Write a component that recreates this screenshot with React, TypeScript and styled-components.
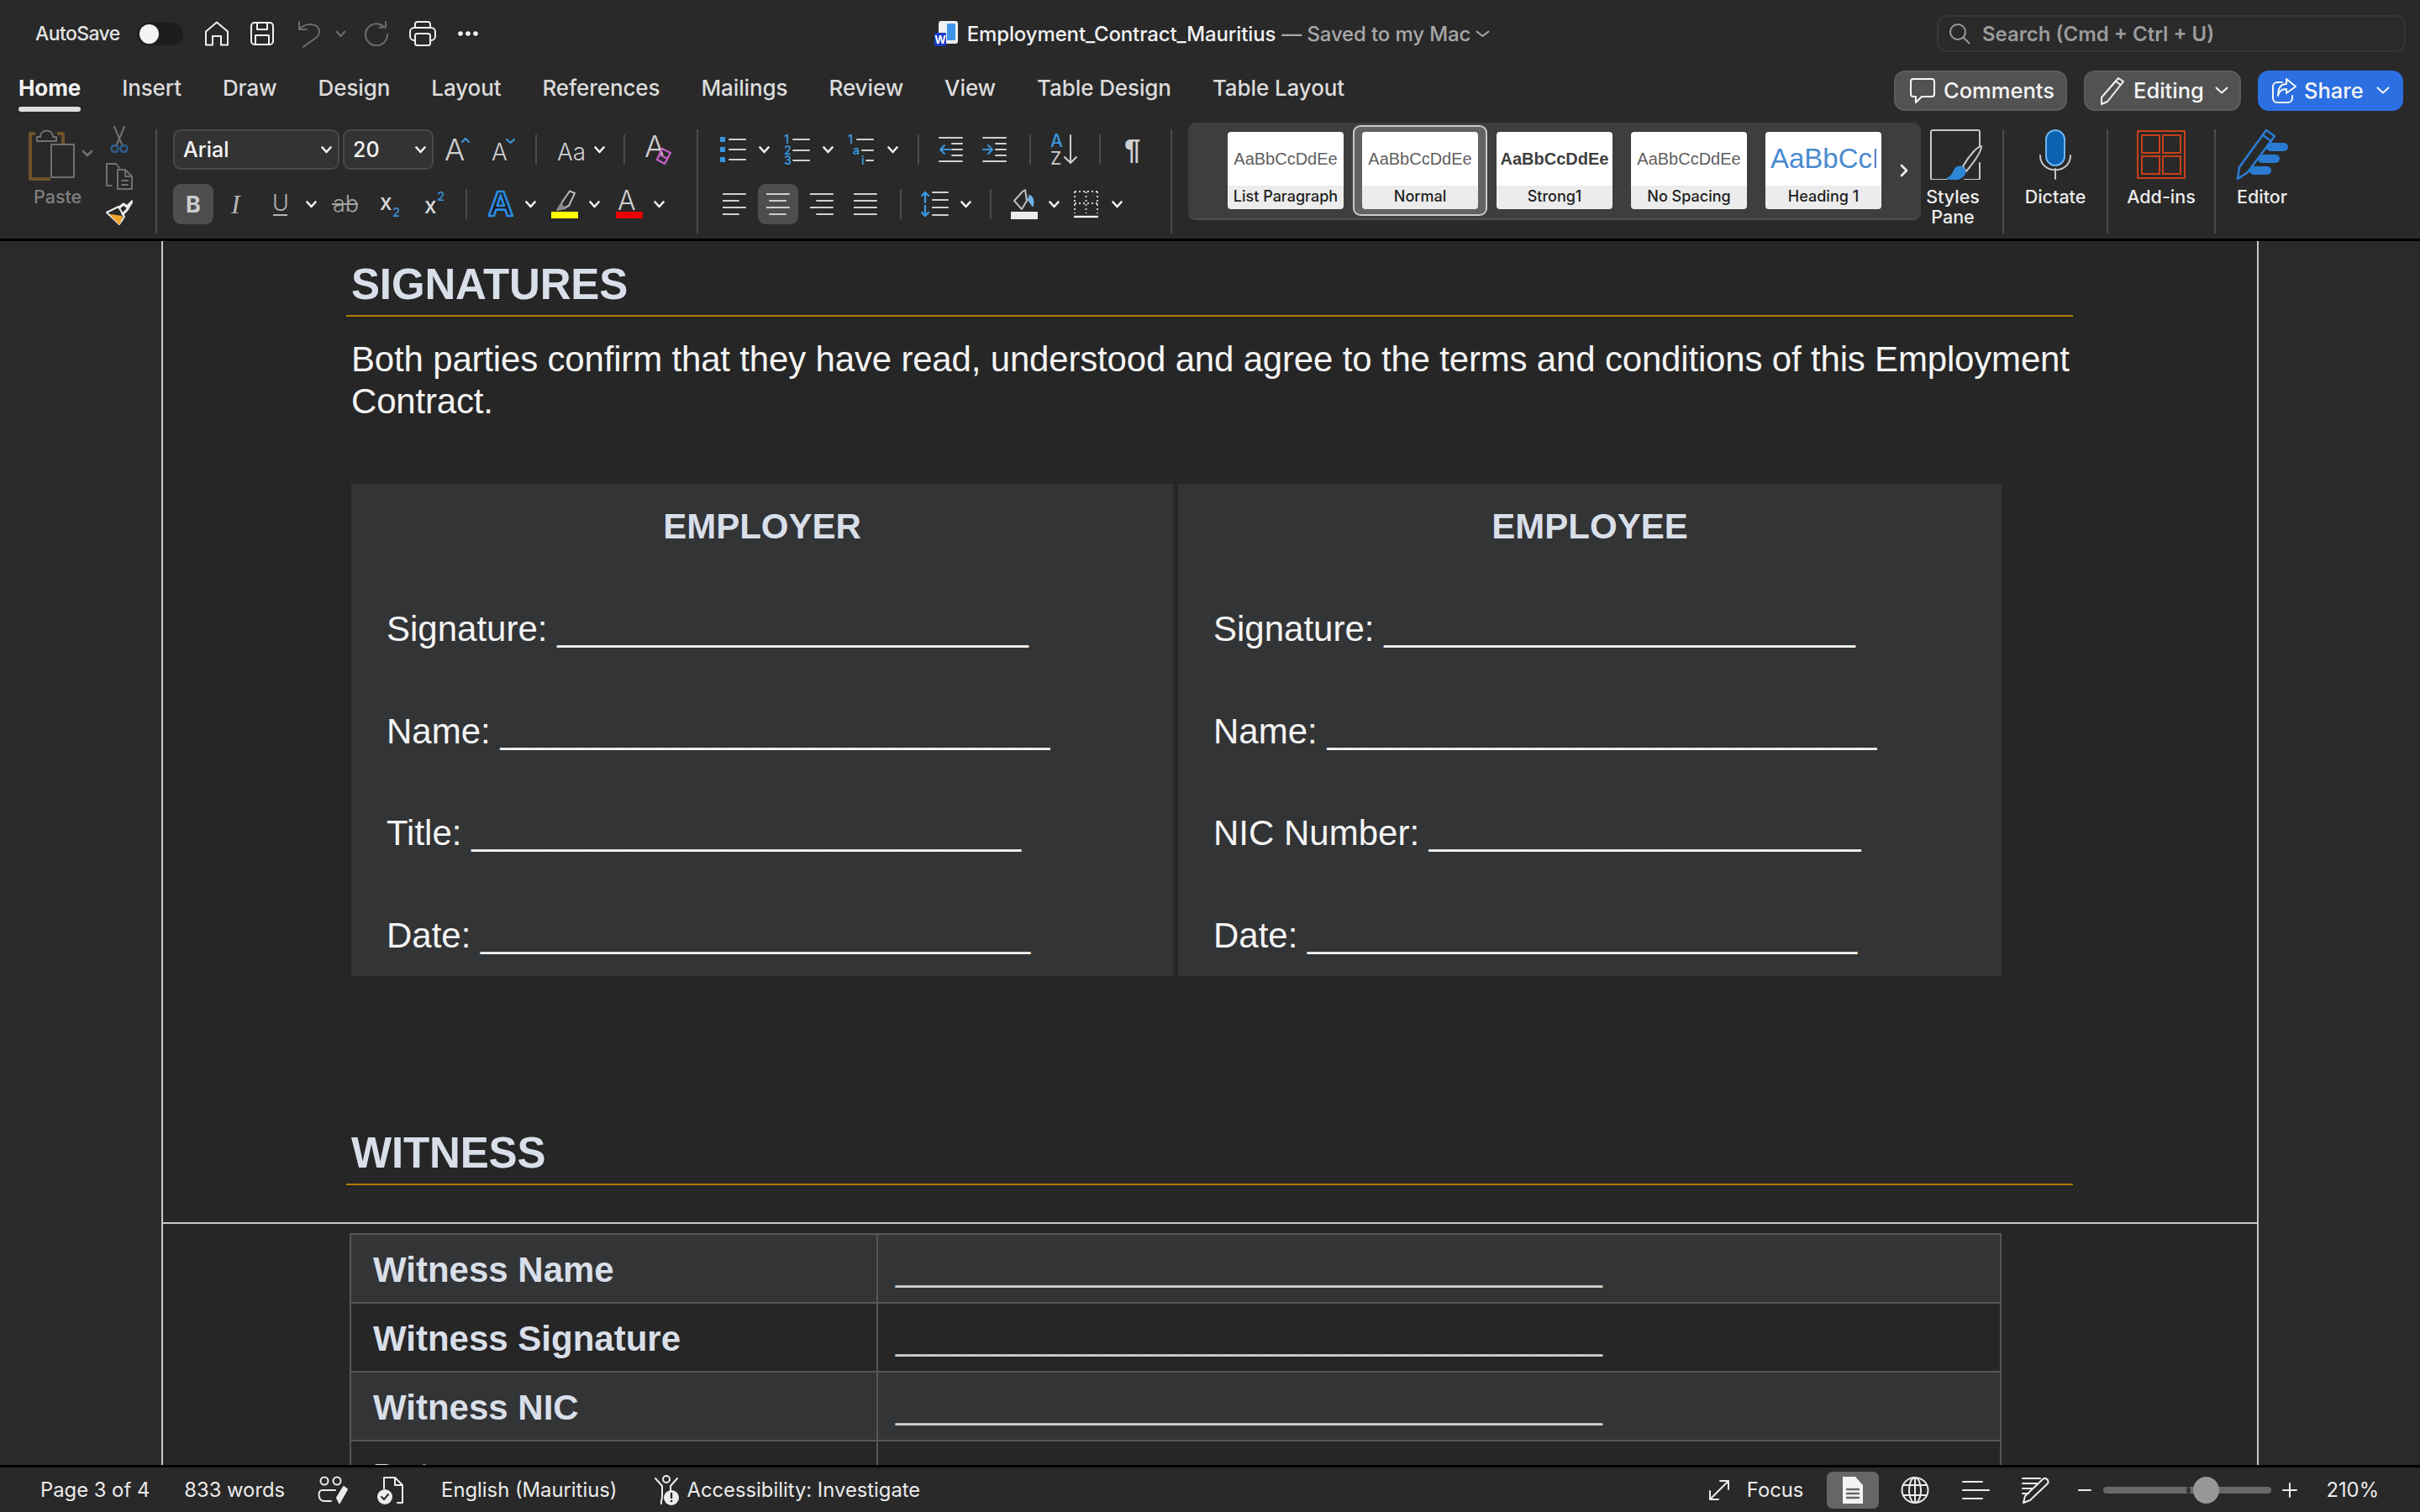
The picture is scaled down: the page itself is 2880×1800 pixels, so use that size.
import React from 'react';
import styled, { createGlobalStyle } from 'styled-components';

const UI = `Inter, "Noto Sans", sans-serif`;
const DOC = `"Liberation Sans", Arial, sans-serif`;
const BLUE = '#3a96dd';
const LINE = '#cfcfcf';

const GlobalStyle = createGlobalStyle`
    html, body { margin: 0; padding: 0; background: #292929; }
    * { box-sizing: border-box; }
`;

const Shell = styled.div`
    display: flex;
    flex-direction: column;
    width: 2880px;
    height: 1800px;
    overflow: hidden;
    background: #292929;
    font-family: ${UI};
    color: #e8e8e8;
`;

/* ---------- icon helpers ---------- */

const Glyph = styled.svg<{ $ml?: number }>`
    flex: none;
    display: block;
    margin-left: ${(p) => p.$ml ?? 0}px;
`;

type IcoProps = { w: number; h: number; ml?: number; sw?: number; children?: React.ReactNode };

const Ico = ({ w, h, ml, sw = 2, children }: IcoProps) => (
    <Glyph
        $ml={ml}
        width={w}
        height={h}
        viewBox={`0 0 ${w} ${h}`}
        fill="none"
        stroke="currentColor"
        strokeWidth={sw}
        strokeLinecap="round"
        strokeLinejoin="round"
    >
        {children}
    </Glyph>
);

const Chev = ({ ml }: { ml?: number }) => (
    <Ico w={13} h={9} ml={ml} sw={2.6}>
        <path d="M1.5 1.5 L6.5 7 L11.5 1.5" stroke="#f2f2f2" />
    </Ico>
);

const GlyphText = styled.text<{ $w?: number; $serif?: boolean; $italic?: boolean }>`
    font-family: ${(p) => (p.$serif ? '"Liberation Serif", serif' : UI)};
    font-weight: ${(p) => p.$w ?? 400};
    font-style: ${(p) => (p.$italic ? 'italic' : 'normal')};
    stroke: none;
`;

const Lines = ({ rows, x = 0 }: { rows: [number, number, number][]; x?: number }) => (
    <g stroke={LINE}>
        {rows.map(([a, b, y]) => (
            <path key={`${a}-${y}`} d={`M${a + x} ${y} H${b + x}`} />
        ))}
    </g>
);

/* ---------- title bar ---------- */

const TitleBar = styled.div`
    display: flex;
    align-items: center;
    height: 80px;
    padding: 0 17px 0 42px;
    flex: none;
`;

const AutoSave = styled.span`
    font-size: 23px;
    font-weight: 500;
    color: #e4e4e4;
    letter-spacing: -0.6px;
`;

const Toggle = styled.span`
    display: flex;
    align-items: center;
    width: 55px;
    height: 27px;
    margin-left: 20px;
    padding-left: 3px;
    border-radius: 14px;
    background: #1d1d1d;
`;

const Knob = styled.span`
    width: 23px;
    height: 23px;
    border-radius: 50%;
    background: #f4f4f4;
`;

const QuickTools = styled.div`
    display: flex;
    align-items: center;
    color: #f0f0f0;
`;

const DocTitle = styled.div`
    display: flex;
    align-items: center;
    margin-left: 543px;
    font-size: 24px;
    font-weight: 500;
    letter-spacing: -0.13px;
    white-space: nowrap;
`;

const FileName = styled.span`
    margin-left: 11px;
    color: #f2f2f2;
`;

const SavedNote = styled.span`
    color: #a8a8a8;
    margin-left: 7px;
`;

const SearchBox = styled.div`
    display: flex;
    align-items: center;
    width: 558px;
    height: 44px;
    margin-left: auto;
    padding-left: 12px;
    border: 2px solid #363636;
    border-radius: 12px;
    background: #2a2a2a;
    color: #9b9b9b;
    font-size: 24px;
    font-weight: 600;
`;

const SearchText = styled.span`
    margin-left: 14px;
`;

/* ---------- tabs ---------- */

const TabRow = styled.div`
    display: flex;
    align-items: center;
    flex: none;
    gap: 49px;
    height: 55px;
    padding: 0 20px 0 22px;
`;

const Tab = styled.div<{ $active?: boolean }>`
    position: relative;
    padding-bottom: 6px;
    font-size: 26px;
    font-weight: ${(p) => (p.$active ? 700 : 500)};
    color: ${(p) => (p.$active ? '#f2f2f2' : '#dcdcdc')};
    letter-spacing: -0.1px;
    &::after {
        content: '';
        display: ${(p) => (p.$active ? 'block' : 'none')};
        position: absolute;
        left: 0;
        right: 0;
        bottom: -7px;
        height: 6px;
        border-radius: 3px;
        background: #dedede;
    }
`;

const Actions = styled.div`
    display: flex;
    gap: 20px;
    margin-left: auto;
`;

const ActionButton = styled.div<{ $w: number; $primary?: boolean }>`
    display: flex;
    align-items: center;
    gap: 9px;
    width: ${(p) => p.$w}px;
    height: 48px;
    padding-left: 16px;
    border-radius: 13px;
    background: ${(p) => (p.$primary ? '#2b6fe3' : '#525252')};
    border: ${(p) => (p.$primary ? 'none' : '2px solid #5c5c5c')};
    color: #f5f5f5;
    font-size: 25.5px;
    font-weight: 500;
`;

/* ---------- ribbon ---------- */

const Ribbon = styled.div`
    display: flex;
    align-items: flex-start;
    flex: none;
    height: 152px;
    padding-top: 11px;
    border-bottom: 3px solid #000;
    color: ${LINE};
`;

const GroupDivider = styled.div<{ $ml?: number }>`
    flex: none;
    width: 2px;
    height: 124px;
    margin: 8px 0 0 ${(p) => p.$ml ?? 0}px;
    background: #4b4b4b;
`;

const ClipboardGroup = styled.div`
    display: flex;
    width: 185px;
    padding: 8px 0 0 34px;
`;

const PasteColumn = styled.div`
    width: 78px;
`;

const PasteLabel = styled.div`
    margin: 5px 0 0 6px;
    font-size: 21.5px;
    font-weight: 500;
    line-height: 26px;
    color: #808080;
`;

const SmallTools = styled.div`
    display: flex;
    flex-direction: column;
    gap: 12px;
    margin: -4px 0 0 14px;
`;

const ToolGroup = styled.div<{ $w: number }>`
    display: flex;
    flex-direction: column;
    gap: 17px;
    width: ${(p) => p.$w}px;
    padding-top: 8px;
`;

const ToolRow = styled.div<{ $ml?: number }>`
    display: flex;
    align-items: center;
    height: 48px;
    margin-left: ${(p) => p.$ml ?? 0}px;
`;

const Combo = styled.div<{ $w: number; $ml?: number }>`
    display: flex;
    align-items: center;
    justify-content: space-between;
    width: ${(p) => p.$w}px;
    height: 48px;
    margin-left: ${(p) => p.$ml ?? 0}px;
    padding: 0 7px 0 10px;
    border: 2px solid #484848;
    border-radius: 9px;
    background: #333333;
    color: #f4f4f4;
    font-size: 25px;
    font-weight: 500;
`;

const Sep = styled.div<{ $ml: number }>`
    flex: none;
    width: 2px;
    height: 36px;
    margin-left: ${(p) => p.$ml}px;
    background: #4b4b4b;
`;

const Pressed = styled.div<{ $ml?: number }>`
    display: flex;
    align-items: center;
    justify-content: center;
    flex: none;
    width: 48px;
    height: 48px;
    margin-left: ${(p) => p.$ml ?? 0}px;
    border-radius: 9px;
    background: #4e4e4e;
`;

const BoldMark = styled.span`
    font-size: 27px;
    font-weight: 700;
    color: #cccccc;
`;

/* ---------- style gallery ---------- */

const Gallery = styled.div`
    display: flex;
    align-items: center;
    flex: none;
    gap: 22px;
    width: 872px;
    height: 116px;
    margin-left: 19px;
    padding-left: 47px;
    border-radius: 9px;
    border-bottom: 2px solid #4d4d4d;
    background: #3e3e3e;
`;

const StyleCard = styled.div<{ $selected?: boolean }>`
    position: relative;
    z-index: 0;
    flex: none;
    width: 138px;
    height: 92px;
    &::before {
        content: '';
        display: ${(p) => (p.$selected ? 'block' : 'none')};
        position: absolute;
        inset: -8px -11px;
        z-index: -1;
        border: 2px solid #c9c9c9;
        border-radius: 9px;
        background: #626262;
    }
`;

const Preview = styled.div<{ $tone: string; $size: number; $bold?: boolean }>`
    display: flex;
    align-items: center;
    justify-content: center;
    height: 64px;
    overflow: hidden;
    border-radius: 4px 4px 0 0;
    background: #fff;
    color: ${(p) => p.$tone};
    font-family: ${DOC};
    font-size: ${(p) => p.$size}px;
    font-weight: ${(p) => (p.$bold ? 700 : 400)};
    white-space: nowrap;
`;

const HeadingPreview = styled(Preview)`
    justify-content: flex-start;
    padding-left: 6px;
    border-right: 6px solid #fff;
`;

const StyleName = styled.div`
    height: 28px;
    border-radius: 0 0 4px 4px;
    background: #ececec;
    color: #1f1f1f;
    font-size: 18px;
    font-weight: 500;
    line-height: 26px;
    text-align: center;
    white-space: nowrap;
`;

const BigTool = styled.div<{ $w: number }>`
    display: flex;
    flex: none;
    flex-direction: column;
    align-items: center;
    width: ${(p) => p.$w}px;
    padding-top: 8px;
`;

const IconArea = styled.div`
    display: flex;
    align-items: center;
    height: 60px;
`;

const BigLabel = styled.div`
    margin-top: 8px;
    color: #ececec;
    font-size: 21.5px;
    font-weight: 500;
    line-height: 24px;
    text-align: center;
`;

/* ---------- document ---------- */

const Workspace = styled.div`
    flex: 1;
    min-height: 0;
    overflow: hidden;
    padding-left: 192px;
    background: #2a2a2a;
`;

const Page = styled.div`
    width: 2496px;
    min-height: 100%;
    border-left: 2px solid #c9c9c9;
    border-right: 2px solid #c9c9c9;
    background: #262626;
    font-family: ${DOC};
    color: #f4f4f4;
    font-size: 42px;
    line-height: 49px;
`;

const PageBody = styled.div`
    padding: 22px 0 0 218px;
`;

const Heading = styled.h2<{ $top?: number }>`
    width: 2055px;
    margin: ${(p) => p.$top ?? 0}px 0 0;
    padding: 0 0 6px 6px;
    border-bottom: 2px solid #ad7c00;
    color: #d9dfe9;
    font-size: 51px;
    font-weight: 700;
    line-height: 60px;
    letter-spacing: -0.15px;
`;

const Para = styled.p`
    width: 2055px;
    margin: 26px 0 0 6px;
    line-height: 49.5px;
    letter-spacing: -0.175px;
`;

const SignGrid = styled.div`
    display: grid;
    grid-template-columns: 978px 980px;
    gap: 6px;
    margin: 74px 0 0 6px;
`;

const SignCell = styled.div`
    display: flex;
    flex-direction: column;
    gap: 72.8px;
    height: 586px;
    padding: 26px 0 0 42px;
    background: #333436;
`;

const SignTitle = styled.div`
    margin-left: -42px;
    color: #d9dfe9;
    font-weight: 700;
    text-align: center;
`;

const PageBreak = styled.div`
    height: 2px;
    margin-top: 44px;
    background: #c9c9c9;
`;

const WitnessTable = styled.div`
    width: 1966px;
    margin: 11px 0 0 222px;
    border: solid #565656;
    border-width: 2px 2px 0;
`;

const WitnessRow = styled.div<{ $shaded?: boolean }>`
    display: grid;
    grid-template-columns: 627px 1fr;
    height: 82px;
    border-bottom: 2px solid #565656;
    background: ${(p) => (p.$shaded ? '#333436' : '#262626')};
`;

const WitnessLabel = styled.div`
    padding: 17px 0 0 26px;
    border-right: 2px solid #565656;
    color: #d9dfe9;
    font-weight: 700;
`;

const WitnessValue = styled.div`
    padding: 16px 0 0 21px;
    color: #d0d0d0;
`;

/* ---------- status bar ---------- */

const StatusBar = styled.div`
    display: flex;
    align-items: center;
    flex: none;
    height: 56px;
    padding: 0 49px 0 48px;
    border-top: 3px solid #000;
    color: #ececec;
    font-size: 23.8px;
`;

const StatusRight = styled.div`
    display: flex;
    align-items: center;
    margin-left: auto;
`;

const StatusText = styled.span<{ $ml?: number }>`
    margin-left: ${(p) => p.$ml ?? 0}px;
    white-space: nowrap;
`;

const ViewButton = styled.div`
    display: flex;
    align-items: center;
    justify-content: center;
    flex: none;
    width: 62px;
    height: 44px;
    margin-left: 28px;
    border-radius: 7px;
    background: #666;
`;

const ZoomTrack = styled.div`
    position: relative;
    flex: none;
    width: 200px;
    height: 8px;
    margin-left: 14px;
    border-radius: 4px;
    background: #686868;
`;

const ZoomTick = styled.div`
    position: absolute;
    left: 99px;
    top: 0;
    width: 5px;
    height: 8px;
    border-radius: 50%;
    background: #333;
`;

const ZoomThumb = styled.div`
    position: absolute;
    left: 107px;
    top: -12px;
    width: 31px;
    height: 32px;
    border-radius: 50%;
    background: #979797;
`;

/* ---------- data ---------- */

const under = (n: number) => '_'.repeat(n);

const employer: [string, number][] = [
    ['Signature:', 24],
    ['Name:', 28],
    ['Title:', 28],
    ['Date:', 28],
];

const employee: [string, number][] = [
    ['Signature:', 24],
    ['Name:', 28],
    ['NIC Number:', 22],
    ['Date:', 28],
];

const tabs = ['Insert', 'Draw', 'Design', 'Layout', 'References', 'Mailings', 'Review', 'View', 'Table Design', 'Table Layout'];

const witnessRows = ['Witness Name', 'Witness Signature', 'Witness NIC', 'Date'];

const AlignIcon = ({ ml, rows }: { ml?: number; rows: [number, number][] }) => (
    <Ico w={28} h={28} ml={ml}>
        <Lines rows={rows.map(([a, b], i) => [a, b, 2 + i * 8] as [number, number, number])} />
    </Ico>
);

const App = () => (
    <Shell>
        <GlobalStyle />
        <TitleBar>
            <AutoSave>AutoSave</AutoSave>
            <Toggle>
                <Knob />
            </Toggle>
            <QuickTools>
                <Ico w={30} h={30} ml={25}>
                    <path d="M2 28.5 V12.5 L15 1.5 L28 12.5 V28.5 H20 V18 H10 V28.5 Z" />
                </Ico>
                <Ico w={28} h={28} ml={25}>
                    <rect x="1" y="1" width="26" height="26" rx="4" />
                    <path d="M8 1 V9 H20 V1 M6 27 V16 H22 V27" />
                </Ico>
                <Ico w={28} h={33} ml={28}>
                    <g stroke="#6c6c6c">
                        <path d="M2 2 V11 H11 M2 11 C8 3 26 2 26 14 C26 21 16 24 7 32" />
                    </g>
                </Ico>
                <Ico w={13} h={9} ml={17}>
                    <path d="M1.5 1.5 L6.5 7 L11.5 1.5" stroke="#6c6c6c" />
                </Ico>
                <Ico w={29} h={30} ml={22}>
                    <g stroke="#6c6c6c">
                        <path d="M22 6 A13 13 0 1 0 27 16 M25 0.5 V7.5 H17.5" />
                    </g>
                </Ico>
                <Ico w={32} h={30} ml={24}>
                    <path d="M7 8 V3.5 a2.5 2.5 0 0 1 2.5 -2.5 H22.5 a2.5 2.5 0 0 1 2.5 2.5 V8" />
                    <rect x="1" y="8" width="30" height="15" rx="5" />
                    <rect x="7" y="15" width="18" height="14" rx="2.5" fill="#292929" />
                </Ico>
                <Ico w={24} h={6} ml={26} sw={0}>
                    <g fill="#f0f0f0">
                        <circle cx="3" cy="3" r="2.8" />
                        <circle cx="12" cy="3" r="2.8" />
                        <circle cx="21" cy="3" r="2.8" />
                    </g>
                </Ico>
            </QuickTools>
            <DocTitle>
                <Ico w={28} h={30} sw={0}>
                    <rect x="5" y="0" width="23" height="27" rx="3" fill="#f2f2f2" />
                    <rect x="15" y="3" width="10" height="20" rx="1" fill="#3f95ea" />
                    <rect x="0" y="14" width="14" height="16" rx="1.5" fill="#1839c4" />
                    <GlyphText x="7" y="27" fontSize="13" fill="#fff" textAnchor="middle" $w={700}>
                        W
                    </GlyphText>
                </Ico>
                <FileName>Employment_Contract_Mauritius</FileName>
                <SavedNote>— Saved to my Mac</SavedNote>
                <Ico w={17} h={9} ml={6}>
                    <path d="M1.5 1.5 L8.5 7 L15.5 1.5" stroke="#a8a8a8" />
                </Ico>
            </DocTitle>
            <SearchBox>
                <Ico w={26} h={26}>
                    <circle cx="11" cy="11" r="9" />
                    <path d="M17.5 17.5 L24.5 24.5" />
                </Ico>
                <SearchText>Search (Cmd + Ctrl + U)</SearchText>
            </SearchBox>
        </TitleBar>

        <TabRow>
            <Tab $active>Home</Tab>
            {tabs.map((t) => (
                <Tab key={t}>{t}</Tab>
            ))}
            <Actions>
                <ActionButton $w={206}>
                    <Ico w={32} h={32}>
                        <path d="M5 2 H27 a3 3 0 0 1 3 3 V20 a3 3 0 0 1 -3 3 H15 L8 30 V23 H5 a3 3 0 0 1 -3 -3 V5 a3 3 0 0 1 3 -3 Z" />
                    </Ico>
                    Comments
                </ActionButton>
                <ActionButton $w={187}>
                    <Ico w={32} h={34}>
                        <path d="M23 2 L29 6 L10 30 L3 33 L3 25 Z M20 6 L26 10" />
                    </Ico>
                    Editing
                    <Ico w={16} h={9} ml={4}>
                        <path d="M1.5 1.5 L8 7.5 L14.5 1.5" />
                    </Ico>
                </ActionButton>
                <ActionButton $w={173} $primary>
                    <Ico w={30} h={32}>
                        <path d="M13 6 H7 a5 5 0 0 0 -5 5 V25 a5 5 0 0 0 5 5 H20 a5 5 0 0 0 5 -5 V22" />
                        <path d="M18 2 L29 11 L18 19 V14 C12 14 9 17 8 22 C8 14 11 8 18 8 Z" />
                    </Ico>
                    Share
                    <Ico w={16} h={9} ml={6}>
                        <path d="M1.5 1.5 L8 7.5 L14.5 1.5" />
                    </Ico>
                </ActionButton>
            </Actions>
        </TabRow>

        <Ribbon>
            <ClipboardGroup>
                <PasteColumn>
                    <Ico w={78} h={62}>
                        <path d="M8 5 H2 V59 H26" stroke="#6e522c" strokeWidth="4" strokeLinecap="butt" />
                        <path d="M34 5 H41 V17" stroke="#6e522c" strokeWidth="4" strokeLinecap="butt" />
                        <path d="M10 9 H14 C14 -1 29 -1 29 9 H33 V14 H10 Z" stroke="#707070" />
                        <rect x="27" y="18" width="27" height="39" stroke="#707070" />
                        <path d="M65 26 L70 31 L75 26" stroke="#707070" strokeWidth="2.6" />
                    </Ico>
                    <PasteLabel>Paste</PasteLabel>
                </PasteColumn>
                <SmallTools>
                    <Ico w={32} h={32}>
                        <path d="M10 1 L20 24 M22 1 L12 24" stroke="#707070" />
                        <circle cx="10.5" cy="27" r="4" stroke="#2f5f8e" strokeWidth="2.4" />
                        <circle cx="21.5" cy="27" r="4" stroke="#2f5f8e" strokeWidth="2.4" />
                    </Ico>
                    <Ico w={32} h={32}>
                        <g stroke="#707070">
                            <path d="M1 27 V1 H12 L16 6" />
                            <path d="M7 27 H1" />
                            <path d="M14 8 H23 L31 16 V31 H14 Z M23 8 V16 H31 M19 21 H26 M19 26 H26" />
                        </g>
                    </Ico>
                    <Ico w={32} h={30}>
                        <path d="M1 15 L15 8 L22 20 L16 29 Z" stroke="#efefef" />
                        <path d="M6 18 L19 20 L16 28 Z" fill="#f0a32e" stroke="#f0a32e" />
                        <path d="M16 9 L21 5 L25 8 L31 2 M20 17 L25 12 L31 2" stroke="#efefef" strokeWidth="3" />
                    </Ico>
                </SmallTools>
            </ClipboardGroup>
            <GroupDivider />

            <ToolGroup $w={642}>
                <ToolRow $ml={19}>
                    <Combo $w={198}>
                        Arial
                        <Chev />
                    </Combo>
                    <Combo $w={108} $ml={4}>
                        20
                        <Chev />
                    </Combo>
                    <Ico w={31} h={30} ml={13} sw={2.2}>
                        <GlyphText x="0" y="28" fontSize="36" fill={LINE} $w={300}>A</GlyphText>
                        <path d="M21 6 L25 2 L29 6" stroke={BLUE} />
                    </Ico>
                    <Ico w={28} h={30} ml={25} sw={2.2}>
                        <GlyphText x="0" y="28" fontSize="28" fill={LINE} $w={300}>A</GlyphText>
                        <path d="M18 3 L22.500 7 L27 3" stroke={BLUE} />
                    </Ico>
                    <Sep $ml={24} />
                    <Ico w={33} h={30} ml={24}>
                        <GlyphText x="0" y="28" fontSize="28" fill={LINE} $w={300}>Aa</GlyphText>
                    </Ico>
                    <Chev ml={11} />
                    <Sep $ml={22} />
                    <Ico w={33} h={38} ml={23}>
                        <GlyphText x="0" y="28" fontSize="36" fill={LINE} $w={300}>A</GlyphText>
                        <path d="M21 18 L31 23 L24 36 L15 31 Z M18.500 25 L27 30" stroke="#c45fc9" strokeWidth="2.400" />
                    </Ico>
                </ToolRow>
                <ToolRow $ml={19}>
                    <Pressed>
                        <BoldMark>B</BoldMark>
                    </Pressed>
                    <Ico w={14} h={30} ml={21}>
                        <GlyphText x="0" y="26" fontSize="32" fill="#b4b4b4" $serif $italic>I</GlyphText>
                    </Ico>
                    <Ico w={19} h={30} ml={35}>
                        <GlyphText x="0" y="23" fontSize="27" fill="#b4b4b4" $w={300}>U</GlyphText>
                        <path d="M1 28 H18" stroke="#b4b4b4" strokeLinecap="butt" />
                    </Ico>
                    <Chev ml={21} />
                    <Ico w={33} h={30} ml={17}>
                        <GlyphText x="2" y="24" fontSize="27" fill="#a4a4a4" $w={300}>ab</GlyphText>
                        <path d="M1 15 H32" stroke="#a4a4a4" strokeLinecap="butt" />
                    </Ico>
                    <Ico w={23} h={30} ml={25}>
                        <GlyphText x="0" y="22" fontSize="26" fill="#d8d8d8" $w={500}>x</GlyphText>
                        <GlyphText x="15" y="30" fontSize="15" fill={BLUE} $w={500}>2</GlyphText>
                    </Ico>
                    <Ico w={24} h={30} ml={30}>
                        <GlyphText x="0" y="26" fontSize="26" fill="#d8d8d8" $w={500}>x</GlyphText>
                        <GlyphText x="15" y="11" fontSize="15" fill={BLUE} $w={500}>2</GlyphText>
                    </Ico>
                    <Sep $ml={25} />
                    <Ico w={34} h={34} ml={23}>
                        <text x="17" y="31" fontSize="42" fontWeight="700" fontFamily={DOC} textAnchor="middle" fill="#1c1c1c" stroke="#2a8ae0" strokeWidth="2.600">A</text>
                    </Ico>
                    <Chev ml={12} />
                    <Ico w={33} h={34} ml={17} sw={2}>
                        <path d="M15 22 L13 16 L23 1.500 L29 4 L22 19 Z" stroke="#b8b8b8" />
                        <path d="M13 16 L8 24 L18 22" fill="#8a8a8a" stroke="#8a8a8a" />
                        <rect x="1" y="26" width="32" height="8" fill="#ffff00" stroke="none" />
                    </Ico>
                    <Chev ml={13} />
                    <Ico w={33} h={34} ml={18}>
                        <GlyphText x="3" y="24" fontSize="32" fill={LINE} $w={300}>A</GlyphText>
                        <rect x="1" y="26" width="32" height="8" fill="#e60000" stroke="none" />
                    </Ico>
                    <Chev ml={13} />
                </ToolRow>
            </ToolGroup>
            <GroupDivider />

            <ToolGroup $w={562}>
                <ToolRow $ml={26}>
                    <Ico w={31} h={34}>
                        <g fill={BLUE} stroke="none">
                            <rect x="0" y="2" width="6" height="6" />
                            <rect x="0" y="14" width="6" height="6" />
                            <rect x="0" y="26" width="6" height="6" />
                        </g>
                        <Lines rows={[[11, 30, 5], [11, 30, 17], [11, 30, 29]]} />
                    </Ico>
                    <Chev ml={15} />
                    <Ico w={31} h={36} ml={17}>
                        <g fill={BLUE} fontSize="14" fontWeight="600">
                            <GlyphText x="0" y="11" $w={600}>1</GlyphText>
                            <GlyphText x="0" y="24" $w={600}>2</GlyphText>
                            <GlyphText x="0" y="36" $w={600}>3</GlyphText>
                        </g>
                        <Lines rows={[[11, 30, 6], [11, 30, 19], [11, 30, 31]]} />
                    </Ico>
                    <Chev ml={15} />
                    <Ico w={32} h={36} ml={17}>
                        <g fill={BLUE} fontSize="14">
                            <GlyphText x="0" y="11" $w={600}>1</GlyphText>
                            <GlyphText x="6" y="24" $w={600}>a</GlyphText>
                            <GlyphText x="16" y="36" $w={600}>i</GlyphText>
                        </g>
                        <Lines rows={[[11, 30, 6], [17, 30, 19], [22, 30, 31]]} />
                    </Ico>
                    <Chev ml={15} />
                    <Sep $ml={23} />
                    <Ico w={29} h={32} ml={23}>
                        <Lines rows={[[1, 28, 2], [1, 28, 30]]} />
                        <path d="M14 16 H2 M7 11 L2 16 L7 21" stroke={BLUE} />
                        <path d="M16 9 H28 M16 16 H28 M16 23 H28" stroke={LINE} />
                    </Ico>
                    <Ico w={29} h={32} ml={23}>
                        <Lines rows={[[1, 28, 2], [1, 28, 30]]} />
                        <path d="M1 16 H12 M7 11 L12 16 L7 21" stroke={BLUE} />
                        <path d="M16 9 H28 M16 16 H28 M16 23 H28" stroke={LINE} />
                    </Ico>
                    <Sep $ml={27} />
                    <Ico w={33} h={38} ml={23}>
                        <GlyphText x="0" y="16" fontSize="21" fill={BLUE} $w={500}>A</GlyphText>
                        <GlyphText x="0" y="37" fontSize="21" fill={LINE} $w={400}>Z</GlyphText>
                        <path d="M24 2 V35 M17 28 L24 35 L31 28" stroke={LINE} />
                    </Ico>
                    <Sep $ml={25} />
                    <Ico w={21} h={32} ml={28}>
                        <text x="0" y="28" fontSize="35" fontWeight="700" fontFamily={DOC} fill={LINE} stroke="none">¶</text>
                    </Ico>
                </ToolRow>
                <ToolRow $ml={29}>
                    <AlignIcon rows={[[0, 27], [0, 19], [0, 27], [0, 19]]} />
                    <Pressed $ml={14}>
                        <AlignIcon rows={[[0, 27], [4, 23], [0, 27], [4, 23]]} />
                    </Pressed>
                    <AlignIcon ml={14} rows={[[0, 27], [8, 27], [0, 27], [8, 27]]} />
                    <AlignIcon ml={24} rows={[[0, 27], [0, 27], [0, 27], [0, 27]]} />
                    <Sep $ml={27} />
                    <Ico w={33} h={34} ml={23}>
                        <path d="M5 15 V3 M1 7 L5 3 L9 7 M5 19 V31 M1 27 L5 31 L9 27" stroke={BLUE} strokeWidth="2.400" />
                        <Lines rows={[[14, 32, 3], [14, 32, 12], [14, 32, 21], [14, 32, 30]]} />
                    </Ico>
                    <Chev ml={14} />
                    <Sep $ml={22} />
                    <Ico w={33} h={36} ml={22}>
                        <path d="M5 14 L15 3 L18 1 L20 14 L14 24 Z" stroke="#bdbdbd" />
                        <path d="M23 8 C28 10 28 16 27 20 C25 17 23 14 21 12" fill="#6fb3e8" stroke="#6fb3e8" />
                        <rect x="1" y="27" width="32" height="9" fill="#ececec" stroke="none" />
                    </Ico>
                    <Chev ml={13} />
                    <Ico w={31} h={34} ml={16}>
                        <path d="M2 2 H29 M2 16 H29 M2 2 V28 M29 2 V28 M15.500 2 V28" stroke={LINE} strokeDasharray="2 3" strokeLinecap="butt" />
                        <path d="M1 32 H30" stroke="#f2f2f2" strokeWidth="2.400" strokeLinecap="butt" />
                    </Ico>
                    <Chev ml={15} />
                </ToolRow>
            </ToolGroup>
            <GroupDivider />

            <Gallery>
                <StyleCard>
                    <Preview $tone="#5f5f5f" $size={20}>AaBbCcDdEe</Preview>
                    <StyleName>List Paragraph</StyleName>
                </StyleCard>
                <StyleCard $selected>
                    <Preview $tone="#5f5f5f" $size={20}>AaBbCcDdEe</Preview>
                    <StyleName>Normal</StyleName>
                </StyleCard>
                <StyleCard>
                    <Preview $tone="#3f3f3f" $size={20} $bold>AaBbCcDdEe</Preview>
                    <StyleName>Strong1</StyleName>
                </StyleCard>
                <StyleCard>
                    <Preview $tone="#5f5f5f" $size={20}>AaBbCcDdEe</Preview>
                    <StyleName>No Spacing</StyleName>
                </StyleCard>
                <StyleCard>
                    <HeadingPreview $tone="#4a8bd0" $size={33}>AaBbCcDdEe</HeadingPreview>
                    <StyleName>Heading 1</StyleName>
                </StyleCard>
                <Ico w={10} h={16} sw={2.6}>
                    <path d="M2 2 L8 8 L2 14" stroke="#f2f2f2" />
                </Ico>
            </Gallery>

            <BigTool $w={76}>
                <IconArea>
                    <Ico w={76} h={60}>
                        <path d="M31 59 H14 a2 2 0 0 1 -2 -2 V2 a2 2 0 0 1 2 -2 H68 a2 2 0 0 1 2 2 V19 M70 39 V57 a2 2 0 0 1 -2 2 H52" transform="translate(0 1)" stroke="#c8c8c8" />
                        <path d="M50 44 C58 30 68 20 72 20 C72 26 64 38 54 50 Z" stroke="#c8c8c8" />
                        <path d="M42 46 C50 42 54 48 52 53 C48 60 38 61 32 58 C38 57 38 50 42 46 Z" fill="#2e87d6" stroke="#2e87d6" />
                    </Ico>
                </IconArea>
                <BigLabel>Styles<br />Pane</BigLabel>
            </BigTool>
            <GroupDivider $ml={21} />
            <BigTool $w={122}>
                <IconArea>
                    <Ico w={40} h={60}>
                        <rect x="9" y="1" width="22" height="42" rx="11" fill="#0a62b0" stroke="#6eb5ef" />
                        <path d="M2 31 C2 54 38 54 38 31 M20 47 V59" stroke="#c6c6c6" />
                    </Ico>
                </IconArea>
                <BigLabel>Dictate</BigLabel>
            </BigTool>
            <GroupDivider />
            <BigTool $w={126}>
                <IconArea>
                    <Ico w={58} h={58}>
                        <g stroke="#c8401a">
                            <rect x="1" y="1" width="56" height="56" />
                            <rect x="6" y="6" width="21" height="21" />
                            <rect x="31" y="6" width="21" height="21" />
                            <rect x="6" y="31" width="21" height="21" />
                            <rect x="31" y="31" width="21" height="21" />
                        </g>
                    </Ico>
                </IconArea>
                <BigLabel>Add-ins</BigLabel>
            </BigTool>
            <GroupDivider />
            <BigTool $w={110}>
                <IconArea>
                    <Ico w={62} h={62}>
                        <path d="M36 2 L46 9 L14 52 L2 60 L4 46 Z M32 8 L42 15" stroke="#2b7bd2" strokeWidth="2.600" />
                        <g fill="#2b7bd2" stroke="none">
                            <rect x="36" y="17" width="26" height="10" rx="5" />
                            <rect x="26" y="31" width="26" height="10" rx="5" />
                            <rect x="16" y="45" width="26" height="10" rx="5" />
                        </g>
                    </Ico>
                </IconArea>
                <BigLabel>Editor</BigLabel>
            </BigTool>
        </Ribbon>

        <Workspace>
            <Page>
                <PageBody>
                    <Heading>SIGNATURES</Heading>
                    <Para>
                        Both parties confirm that they have read, understood and agree to the terms and conditions of this Employment Contract.
                    </Para>
                    <SignGrid>
                        <SignCell>
                            <SignTitle>EMPLOYER</SignTitle>
                            {employer.map(([label, n]) => (
                                <div key={label}>{label} {under(n)}</div>
                            ))}
                        </SignCell>
                        <SignCell>
                            <SignTitle>EMPLOYEE</SignTitle>
                            {employee.map(([label, n]) => (
                                <div key={label}>{label} {under(n)}</div>
                            ))}
                        </SignCell>
                    </SignGrid>
                    <Heading $top={181}>WITNESS</Heading>
                </PageBody>
                <PageBreak />
                <WitnessTable>
                    {witnessRows.map((label, i) => (
                        <WitnessRow key={label} $shaded={i % 2 === 0}>
                            <WitnessLabel>{label}</WitnessLabel>
                            <WitnessValue>{under(36)}</WitnessValue>
                        </WitnessRow>
                    ))}
                </WitnessTable>
            </Page>
        </Workspace>

        <StatusBar>
            <StatusText>Page 3 of 4</StatusText>
            <StatusText $ml={41}>833 words</StatusText>
            <Ico w={38} h={34} ml={38}>
                <circle cx="9" cy="6" r="4.500" />
                <circle cx="24" cy="6" r="4.500" />
                <path d="M22 17 H6 C1 17 1 30 9 30 H17" />
                <path d="M27 32 L36 16 L32 13 L24 26 Z" fill="#ececec" />
            </Ico>
            <Ico w={32} h={36} ml={34}>
                <path d="M8 16 V3 H21 L30 12 V33 H24 M21 3 V12 H30" />
                <circle cx="9" cy="26" r="9" fill="#ececec" stroke="none" />
                <path d="M5 26 L8 29 L13 23" stroke="#292929" />
            </Ico>
            <StatusText $ml={44}>English (Mauritius)</StatusText>
            <Ico w={32} h={36} ml={44}>
                <circle cx="15" cy="5" r="4" />
                <path d="M2 4 L10 13 V25 C10 30 8 32 9 34 M28 4 L20 13 V18" />
                <circle cx="21" cy="27" r="9" fill="#ececec" stroke="none" />
                <path d="M21 22 V27" stroke="#292929" strokeWidth="2.400" />
                <circle cx="21" cy="31" r="1.300" fill="#292929" stroke="none" />
            </Ico>
            <StatusText $ml={7}>Accessibility: Investigate</StatusText>

            <StatusRight>
                <Ico w={26} h={26}>
                    <path d="M2 24 L24 2 M14 2 H24 V12 M2 14 V24 H12" />
                </Ico>
                <StatusText $ml={20}>Focus</StatusText>
                <ViewButton>
                    <Ico w={26} h={32} sw={0}>
                        <path d="M1 0 H16 L25 10 V32 H1 Z" fill="#f4f4f4" />
                        <path d="M6 15 H20 M6 20 H20 M6 25 H20" stroke="#666" strokeWidth="2.400" />
                    </Ico>
                </ViewButton>
                <Ico w={34} h={32} ml={26}>
                    <ellipse cx="17" cy="16" rx="15.500" ry="15" />
                    <ellipse cx="17" cy="16" rx="7" ry="15" />
                    <path d="M17 1 V31 M3 10 H31 M3 22 H31" />
                </Ico>
                <Ico w={33} h={24} ml={39}>
                    <path d="M1 2 H24 M1 12 H32 M1 22 H24" />
                </Ico>
                <Ico w={34} h={32} ml={38}>
                    <path d="M1 2 H22 M1 8 H18 M1 14 H12 M1 20 H8" />
                    <path d="M2 31 L4 23 L25 3 C28 0 33 4 31 8 L10 28 Z" />
                </Ico>
                <Ico w={16} h={4} ml={33}>
                    <path d="M1 2 H15" />
                </Ico>
                <ZoomTrack>
                    <ZoomTick />
                    <ZoomThumb />
                </ZoomTrack>
                <Ico w={18} h={18} ml={13}>
                    <path d="M1 9 H17 M9 1 V17" />
                </Ico>
                <StatusText $ml={34}>210%</StatusText>
            </StatusRight>
        </StatusBar>
    </Shell>
);

export default App;
